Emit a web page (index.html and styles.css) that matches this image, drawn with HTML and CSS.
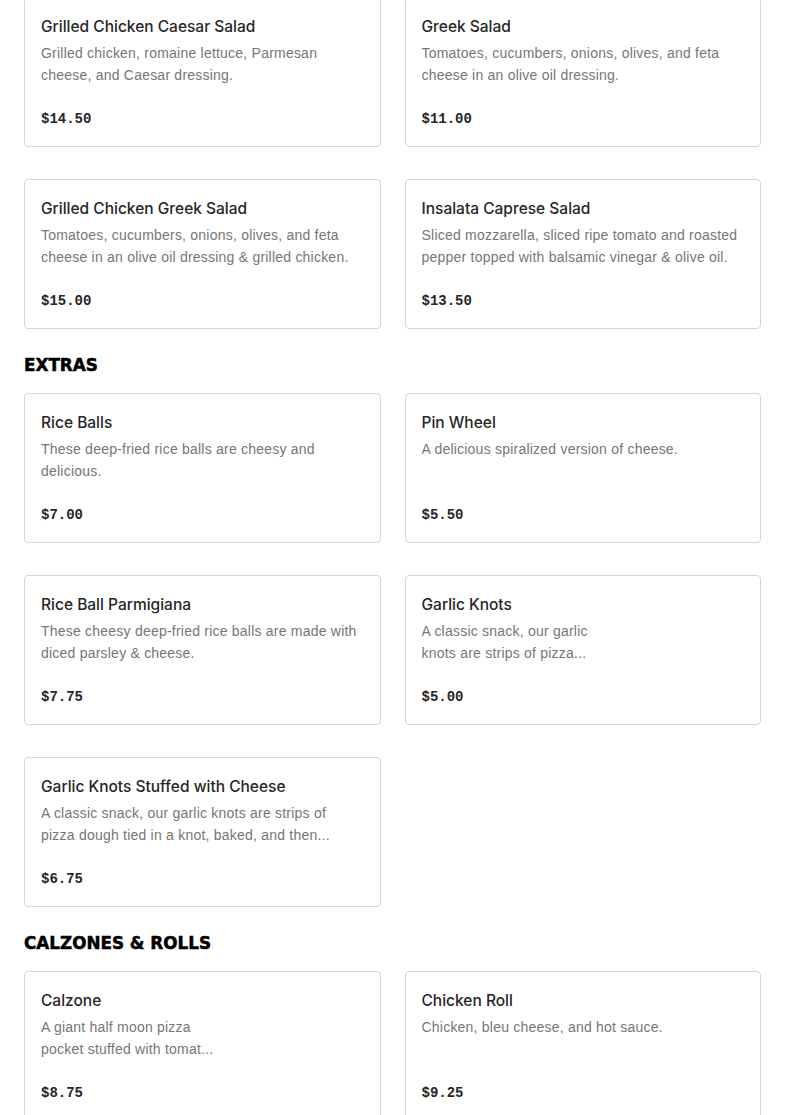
FILE: index.html
```html
<!DOCTYPE html>
<html>
<head>
<meta charset="utf-8">
<link rel="stylesheet" href="styles.css">
</head>
<body>
<main class="menu">
  <section class="section first">
    <div class="grid">
      <div class="card">
        <h3 class="title">Grilled Chicken Caesar Salad</h3>
        <p class="desc">Grilled chicken, romaine lettuce, Parmesan cheese, and Caesar dressing.</p>
        <div class="price">$14.50</div>
      </div>
      <div class="card">
        <h3 class="title">Greek Salad</h3>
        <p class="desc">Tomatoes, cucumbers, onions, olives, and feta cheese in an olive oil dressing.</p>
        <div class="price">$11.00</div>
      </div>
      <div class="card">
        <h3 class="title">Grilled Chicken Greek Salad</h3>
        <p class="desc">Tomatoes, cucumbers, onions, olives, and feta cheese in an olive oil dressing &amp; grilled chicken.</p>
        <div class="price">$15.00</div>
      </div>
      <div class="card">
        <h3 class="title">Insalata Caprese Salad</h3>
        <p class="desc">Sliced mozzarella, sliced ripe tomato and roasted pepper topped with balsamic vinegar &amp; olive oil.</p>
        <div class="price">$13.50</div>
      </div>
    </div>
  </section>

  <section class="section">
    <h2 class="heading">EXTRAS</h2>
    <div class="grid">
      <div class="card">
        <h3 class="title">Rice Balls</h3>
        <p class="desc">These deep-fried rice balls are cheesy and delicious.</p>
        <div class="price">$7.00</div>
      </div>
      <div class="card">
        <h3 class="title">Pin Wheel</h3>
        <p class="desc">A delicious spiralized version of cheese.</p>
        <div class="price">$5.50</div>
      </div>
      <div class="card">
        <h3 class="title">Rice Ball Parmigiana</h3>
        <p class="desc">These cheesy deep-fried rice balls are made with diced parsley &amp; cheese.</p>
        <div class="price">$7.75</div>
      </div>
      <div class="card">
        <h3 class="title">Garlic Knots</h3>
        <p class="desc narrow">A classic snack, our garlic knots are strips of pizza...</p>
        <div class="price">$5.00</div>
      </div>
      <div class="card">
        <h3 class="title">Garlic Knots Stuffed with Cheese</h3>
        <p class="desc">A classic snack, our garlic knots are strips of pizza dough tied in a knot, baked, and then...</p>
        <div class="price">$6.75</div>
      </div>
    </div>
  </section>

  <section class="section">
    <h2 class="heading">CALZONES &amp; ROLLS</h2>
    <div class="grid">
      <div class="card">
        <h3 class="title">Calzone</h3>
        <p class="desc narrow">A giant half moon pizza pocket stuffed with tomat...</p>
        <div class="price">$8.75</div>
      </div>
      <div class="card">
        <h3 class="title">Chicken Roll</h3>
        <p class="desc">Chicken, bleu cheese, and hot sauce.</p>
        <div class="price">$9.25</div>
      </div>
    </div>
  </section>
</main>
</body>
</html>
```

FILE: styles.css
```css
html, body {
  margin: 0;
  padding: 0;
  background: #ffffff;
}

body {
  font-family: "Liberation Sans", Arial, sans-serif;
  color: #2a2a2a;
  overflow: hidden;
}

.menu {
  padding: 0 24px;
  margin-top: -3px;
}

.section {
  padding-top: 24px;
}

.section.first {
  padding-top: 0;
}

.heading {
  margin: 0 0 16px 0;
  font-family: "DejaVu Sans", "Liberation Sans", sans-serif;
  font-weight: 700;
  font-size: 16.8px;
  line-height: 24px;
  color: #000000;
  -webkit-text-stroke: 0.5px #000;
}

.grid {
  display: grid;
  grid-template-columns: 1fr 1fr;
  column-gap: 24px;
  row-gap: 32px;
}

.card {
  border: 1px solid #d6d6d6;
  border-radius: 4px;
  padding: 17px 16px 17px 16px;
  background: #fff;
}

.title {
  margin: 0 0 3px 0;
  font-family: "Inter", "Liberation Sans", sans-serif;
  font-weight: 500;
  font-size: 15.5px;
  line-height: 24px;
  color: #262626;
}

.desc {
  margin: 0;
  font-size: 14px;
  line-height: 22px;
  letter-spacing: 0.22px;
  color: #767676;
  height: 44px;
  overflow: hidden;
}

.desc.narrow {
  max-width: 190px;
}

.price {
  margin-top: 23px;
  font-family: "Liberation Mono", "Courier New", monospace;
  font-weight: 700;
  font-size: 14px;
  line-height: 20px;
  color: #262626;
}
```
